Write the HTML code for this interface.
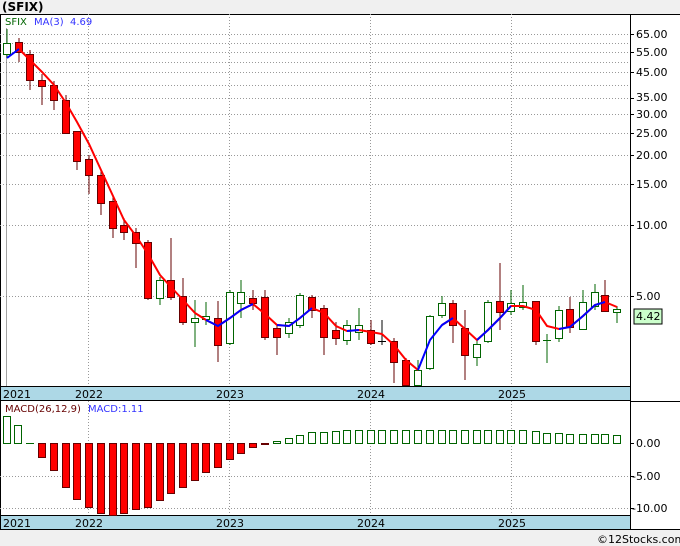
<!DOCTYPE html>
<html><head><meta charset="utf-8"><style>
html,body{margin:0;padding:0;background:#f0f0f0;}
svg{display:block;font-family:"DejaVu Sans","Liberation Sans",sans-serif;}
</style></head><body>
<svg width="680" height="546" viewBox="0 0 680 546" xmlns="http://www.w3.org/2000/svg">
<rect x="0" y="0" width="680" height="546" fill="#f0f0f0"/>
<text x="2" y="11" font-size="12" font-weight="bold" fill="#000">(SFIX)</text>
<rect x="0" y="14" width="680" height="515" fill="#fff"/>
<line x1="0" y1="14.5" x2="680" y2="14.5" stroke="#000"/>
<line x1="0.5" y1="14" x2="0.5" y2="529" stroke="#000"/>
<line x1="630.5" y1="14" x2="630.5" y2="529" stroke="#000"/>
<g stroke="#999" stroke-dasharray="1,2" stroke-width="1">
<line x1="0" y1="34.5" x2="630" y2="34.5"/><line x1="0" y1="43.5" x2="630" y2="43.5"/>
<line x1="0" y1="52.5" x2="630" y2="52.5"/><line x1="0" y1="62.5" x2="630" y2="62.5"/>
<line x1="0" y1="72.5" x2="630" y2="72.5"/><line x1="0" y1="85.5" x2="630" y2="85.5"/>
<line x1="0" y1="98.5" x2="630" y2="98.5"/><line x1="0" y1="114.5" x2="630" y2="114.5"/>
<line x1="0" y1="133.5" x2="630" y2="133.5"/><line x1="0" y1="155.5" x2="630" y2="155.5"/>
<line x1="0" y1="184.5" x2="630" y2="184.5"/><line x1="0" y1="225.5" x2="630" y2="225.5"/>
<line x1="0" y1="296.5" x2="630" y2="296.5"/>
<line x1="88.5" y1="14" x2="88.5" y2="529"/><line x1="229.5" y1="14" x2="229.5" y2="529"/>
<line x1="370.5" y1="14" x2="370.5" y2="529"/><line x1="511.5" y1="14" x2="511.5" y2="529"/>
<line x1="0" y1="476.5" x2="630" y2="476.5"/><line x1="0" y1="508.5" x2="630" y2="508.5"/>
</g>
<line x1="6.5" y1="28" x2="6.5" y2="387" stroke="#666" stroke-width="0.6"/>
<g font-size="11" fill="#000">
<text x="636" y="38">65.00</text><text x="636" y="56">55.00</text><text x="636" y="76">45.00</text>
<text x="636" y="101">35.00</text><text x="636" y="118">30.00</text><text x="636" y="137">25.00</text>
<text x="636" y="159">20.00</text><text x="636" y="188">15.00</text><text x="636" y="229">10.00</text>
<text x="636" y="300">5.00</text>
<text x="636" y="447">0.00</text><text x="632" y="480">-5.00</text><text x="632" y="512">-10.00</text>
</g>
<g stroke="#000">
<line x1="630" y1="34.5" x2="634" y2="34.5"/><line x1="630" y1="52.5" x2="634" y2="52.5"/>
<line x1="630" y1="72.5" x2="634" y2="72.5"/><line x1="630" y1="98.5" x2="634" y2="98.5"/>
<line x1="630" y1="114.5" x2="634" y2="114.5"/><line x1="630" y1="133.5" x2="634" y2="133.5"/>
<line x1="630" y1="155.5" x2="634" y2="155.5"/><line x1="630" y1="184.5" x2="634" y2="184.5"/>
<line x1="630" y1="225.5" x2="634" y2="225.5"/><line x1="630" y1="296.5" x2="634" y2="296.5"/>
<line x1="630" y1="443.5" x2="634" y2="443.5"/><line x1="630" y1="476.5" x2="634" y2="476.5"/><line x1="630" y1="508.5" x2="634" y2="508.5"/>
</g>
<rect x="634" y="309" width="28" height="15" fill="#ccffcc" stroke="#000"/>
<text x="636" y="320" font-size="11">4.42</text>
<text x="5" y="25" font-size="10" fill="#006400">SFIX</text>
<text x="34" y="25" font-size="10" fill="#3333ff">MA(3)</text>
<text x="70" y="25" font-size="10" fill="#3333ff">4.69</text>
<g stroke-width="1">
<g stroke="#006400" fill="#fff">
<line x1="7" y1="29" x2="7" y2="58"/><rect x="3.5" y="43.5" width="7" height="11"/>
<line x1="160" y1="277" x2="160" y2="305"/><rect x="156.5" y="280.5" width="7" height="18"/>
<line x1="195" y1="300" x2="195" y2="347"/><rect x="191.5" y="318.5" width="7" height="4"/>
<line x1="206" y1="302" x2="206" y2="325"/><rect x="202.5" y="316.5" width="7" height="3"/>
<line x1="230" y1="290" x2="230" y2="345"/><rect x="226.5" y="292.5" width="7" height="51"/>
<line x1="241" y1="280" x2="241" y2="318"/><rect x="237.5" y="292.5" width="7" height="11"/>
<line x1="289" y1="318" x2="289" y2="338"/><rect x="285.5" y="322.5" width="7" height="11"/>
<line x1="300" y1="293" x2="300" y2="328"/><rect x="296.5" y="295.5" width="7" height="30"/>
<line x1="347" y1="320" x2="347" y2="345"/><rect x="343.5" y="325.5" width="7" height="15"/>
<line x1="359" y1="308" x2="359" y2="340"/><rect x="355.5" y="325.5" width="7" height="7"/>
<line x1="418" y1="360" x2="418" y2="386"/><rect x="414.5" y="370.5" width="7" height="15"/>
<line x1="430" y1="315" x2="430" y2="370"/><rect x="426.5" y="316.5" width="7" height="52"/>
<line x1="442" y1="296" x2="442" y2="318"/><rect x="438.5" y="303.5" width="7" height="12"/>
<line x1="477" y1="340" x2="477" y2="366"/><rect x="473.5" y="344.5" width="7" height="13"/>
<line x1="488" y1="300" x2="488" y2="343"/><rect x="484.5" y="302.5" width="7" height="39"/>
<line x1="511" y1="290" x2="511" y2="315"/><rect x="507.5" y="303.5" width="7" height="8"/>
<line x1="523" y1="285" x2="523" y2="310"/><rect x="519.5" y="302.5" width="7" height="5"/>
<line x1="547" y1="334" x2="547" y2="363"/><line x1="543" y1="340.5" x2="551" y2="340.5"/>
<line x1="559" y1="306" x2="559" y2="342"/><rect x="555.5" y="310.5" width="7" height="28"/>
<line x1="583" y1="290" x2="583" y2="330"/><rect x="579.5" y="302.5" width="7" height="27"/>
<line x1="595" y1="284" x2="595" y2="310"/><rect x="591.5" y="292.5" width="7" height="14"/>
<line x1="617" y1="306" x2="617" y2="323"/><rect x="613.5" y="309.5" width="7" height="3"/>
</g>
<g stroke="#600" fill="#f00">
<line x1="19" y1="38" x2="19" y2="62"/><rect x="15.5" y="42.5" width="7" height="10"/>
<line x1="30" y1="50" x2="30" y2="90"/><rect x="26.5" y="54.5" width="7" height="26"/>
<line x1="42" y1="74" x2="42" y2="105"/><rect x="38.5" y="80.5" width="7" height="6"/>
<line x1="54" y1="81" x2="54" y2="110"/><rect x="50.5" y="85.5" width="7" height="15"/>
<line x1="66" y1="95" x2="66" y2="134"/><rect x="62.5" y="100.5" width="7" height="33"/>
<line x1="77" y1="131" x2="77" y2="170"/><rect x="73.5" y="131.5" width="7" height="30"/>
<line x1="89" y1="155" x2="89" y2="194"/><rect x="85.5" y="159.5" width="7" height="16"/>
<line x1="101" y1="171" x2="101" y2="215"/><rect x="97.5" y="175.5" width="7" height="28"/>
<line x1="113" y1="195" x2="113" y2="238"/><rect x="109.5" y="201.5" width="7" height="27"/>
<line x1="124" y1="218" x2="124" y2="240"/><rect x="120.5" y="225.5" width="7" height="7"/>
<line x1="136" y1="228" x2="136" y2="268"/><rect x="132.5" y="232.5" width="7" height="11"/>
<line x1="148" y1="240" x2="148" y2="300"/><rect x="144.5" y="242.5" width="7" height="56"/>
<line x1="171" y1="238" x2="171" y2="300"/><rect x="167.5" y="280.5" width="7" height="17"/>
<line x1="183" y1="278" x2="183" y2="325"/><rect x="179.5" y="296.5" width="7" height="26"/>
<line x1="218" y1="301" x2="218" y2="362"/><rect x="214.5" y="318.5" width="7" height="27"/>
<line x1="253" y1="290" x2="253" y2="310"/><rect x="249.5" y="298.5" width="7" height="5"/>
<line x1="265" y1="290" x2="265" y2="340"/><rect x="261.5" y="297.5" width="7" height="40"/>
<line x1="277" y1="326" x2="277" y2="355"/><rect x="273.5" y="328.5" width="7" height="9"/>
<line x1="312" y1="295" x2="312" y2="318"/><rect x="308.5" y="297.5" width="7" height="13"/>
<line x1="324" y1="305" x2="324" y2="355"/><rect x="320.5" y="308.5" width="7" height="29"/>
<line x1="336" y1="322" x2="336" y2="345"/><rect x="332.5" y="330.5" width="7" height="8"/>
<line x1="371" y1="320" x2="371" y2="345"/><rect x="367.5" y="330.5" width="7" height="13"/>
<line x1="394" y1="338" x2="394" y2="383"/><rect x="390.5" y="341.5" width="7" height="21"/>
<line x1="406" y1="358" x2="406" y2="386"/><rect x="402.5" y="360.5" width="7" height="25"/>
<line x1="453" y1="300" x2="453" y2="343"/><rect x="449.5" y="303.5" width="7" height="22"/>
<line x1="465" y1="310" x2="465" y2="380"/><rect x="461.5" y="328.5" width="7" height="27"/>
<line x1="500" y1="263" x2="500" y2="330"/><rect x="496.5" y="301.5" width="7" height="11"/>
<line x1="536" y1="301" x2="536" y2="345"/><rect x="532.5" y="301.5" width="7" height="40"/>
<line x1="570" y1="297" x2="570" y2="333"/><rect x="566.5" y="309.5" width="7" height="18"/>
<line x1="605" y1="280" x2="605" y2="312"/><rect x="601.5" y="295.5" width="7" height="16"/>
</g>
<g stroke="#000"><line x1="382" y1="320" x2="382" y2="345"/><line x1="378" y1="341.5" x2="386" y2="341.5"/></g>
</g>
<polyline fill="none" stroke="#f00" stroke-width="2" points="19,49 30,60 42,72 54,85 66,103 77,122 89,144 101,170 113,196 124,220 136,236 148,254 160,275 171,287 183,300 195,313 206,320 218,326 230,318 241,310 253,304 265,314 277,325 289,326 300,318 312,308 324,313 336,326 347,331 359,330 371,332 382,334 394,345 406,360 418,370"/>
<polyline fill="none" stroke="#f00" stroke-width="2" points="442,325 453,318 465,329 477,340 488,330 500,318 511,306 523,306 536,310 547,326 559,329 570,327 583,316 595,305 605,302 617,307"/>
<polyline fill="none" stroke="#00f" stroke-width="2" points="7,58 19,49"/>
<polyline fill="none" stroke="#00f" stroke-width="2" points="206,320 218,326 230,318 241,310 253,304"/>
<polyline fill="none" stroke="#00f" stroke-width="2" points="277,325 289,326 300,318 312,308"/>
<polyline fill="none" stroke="#00f" stroke-width="2" points="347,331 359,330"/>
<polyline fill="none" stroke="#00f" stroke-width="2" points="418,370 430,340 442,325 453,318"/>
<polyline fill="none" stroke="#00f" stroke-width="2" points="477,340 488,330 500,318 511,306"/>
<polyline fill="none" stroke="#00f" stroke-width="2" points="559,329 570,327 583,316 595,305 605,302"/>
<rect x="0.5" y="386.5" width="630" height="14" fill="#add8e6" stroke="#000"/>
<rect x="0.5" y="515.5" width="630" height="14" fill="#add8e6" stroke="#000"/>
<line x1="630" y1="401.5" x2="680" y2="401.5" stroke="#000"/>
<g font-size="11" fill="#000">
<text x="3" y="398">2021</text><text x="75" y="398">2022</text><text x="216" y="398">2023</text><text x="357" y="398">2024</text><text x="498" y="398">2025</text>
<text x="3" y="527">2021</text><text x="75" y="527">2022</text><text x="216" y="527">2023</text><text x="357" y="527">2024</text><text x="498" y="527">2025</text>
</g>
<text x="5" y="412" font-size="10" fill="#600">MACD(26,12,9)</text>
<text x="88" y="412" font-size="10" fill="#3333ff">MACD:1.11</text>
<g stroke="#006400" fill="#fff">
<rect x="3.5" y="416.5" width="7" height="27"/><rect x="14.5" y="425.5" width="7" height="18"/>
<rect x="273.5" y="441.5" width="7" height="2"/><rect x="285.5" y="438.5" width="7" height="5"/>
<rect x="296.5" y="435.5" width="7" height="8"/><rect x="308.5" y="432.5" width="7" height="11"/>
<rect x="320.5" y="432.5" width="7" height="11"/><rect x="332.5" y="431.5" width="7" height="12"/>
<rect x="343.5" y="430.5" width="7" height="13"/><rect x="355.5" y="430.5" width="7" height="13"/>
<rect x="367.5" y="430.5" width="7" height="13"/><rect x="378.5" y="430.5" width="7" height="13"/>
<rect x="390.5" y="430.5" width="7" height="13"/><rect x="402.5" y="430.5" width="7" height="13"/>
<rect x="414.5" y="430.5" width="7" height="13"/><rect x="426.5" y="430.5" width="7" height="13"/>
<rect x="438.5" y="430.5" width="7" height="13"/><rect x="449.5" y="430.5" width="7" height="13"/>
<rect x="461.5" y="430.5" width="7" height="13"/><rect x="473.5" y="430.5" width="7" height="13"/>
<rect x="484.5" y="430.5" width="7" height="13"/><rect x="496.5" y="430.5" width="7" height="13"/>
<rect x="507.5" y="430.5" width="7" height="13"/><rect x="519.5" y="430.5" width="7" height="13"/>
<rect x="532.5" y="431.5" width="7" height="12"/><rect x="543.5" y="433.5" width="7" height="10"/>
<rect x="555.5" y="433.5" width="7" height="10"/><rect x="566.5" y="434.5" width="7" height="9"/>
<rect x="579.5" y="434.5" width="7" height="9"/><rect x="591.5" y="434.5" width="7" height="9"/>
<rect x="601.5" y="434.5" width="7" height="9"/><rect x="613.5" y="435.5" width="7" height="8"/>
</g>
<line x1="26" y1="443.5" x2="34" y2="443.5" stroke="#006400"/>
<g stroke="#600" fill="#f00">
<rect x="38.5" y="443.5" width="7" height="14"/><rect x="50.5" y="443.5" width="7" height="27"/>
<rect x="62.5" y="443.5" width="7" height="44"/><rect x="73.5" y="443.5" width="7" height="56"/>
<rect x="85.5" y="443.5" width="7" height="64"/><rect x="97.5" y="443.5" width="7" height="70"/>
<rect x="109.5" y="443.5" width="7" height="72"/><rect x="120.5" y="443.5" width="7" height="70"/>
<rect x="132.5" y="443.5" width="7" height="66"/><rect x="144.5" y="443.5" width="7" height="64"/>
<rect x="156.5" y="443.5" width="7" height="57"/><rect x="167.5" y="443.5" width="7" height="50"/>
<rect x="179.5" y="443.5" width="7" height="44"/><rect x="191.5" y="443.5" width="7" height="37"/>
<rect x="202.5" y="443.5" width="7" height="29"/><rect x="214.5" y="443.5" width="7" height="24"/>
<rect x="226.5" y="443.5" width="7" height="16"/><rect x="237.5" y="443.5" width="7" height="10"/>
<rect x="249.5" y="443.5" width="7" height="4"/><rect x="261.5" y="443.5" width="7" height="1" fill="#800"/>
</g>
<line x1="0" y1="529.5" x2="680" y2="529.5" stroke="#000"/>
<text x="597" y="543" font-size="11" fill="#000">©12Stocks.com</text>
</svg>
</body></html>
